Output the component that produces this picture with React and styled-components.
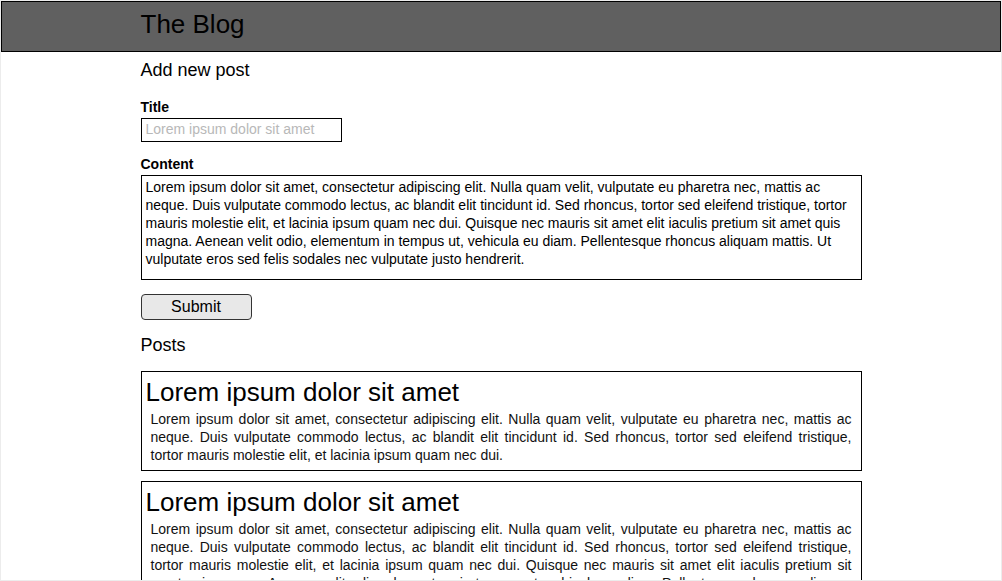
import React from "react";
import styled, { createGlobalStyle } from "styled-components";

const GlobalStyle = createGlobalStyle`
  html, body {
    margin: 0;
    padding: 0;
    background: #ffffff;
  }
  body {
    font-family: "Liberation Sans", Arial, sans-serif;
    color: #000;
  }
  * { box-sizing: border-box; }
`;

const Page = styled.div`
  width: 1002px;
  height: 581px;
  border: 1px solid #ececec;
  overflow: hidden;
  background: #fff;
`;

const Header = styled.header`
  height: 51px;
  background: #606060;
  border: 1px solid #000;
  padding-top: 7px;
`;

const Column = styled.div`
  width: 721px;
  margin: 0 auto;
`;

const Brand = styled.h1`
  margin: 0;
  font-size: 26px;
  line-height: 30px;
  font-weight: 400;
  color: #000;
`;

const SectionTitle = styled.h2`
  margin: ${(p) => p.$top}px 0 0;
  font-size: 18px;
  line-height: 21px;
  font-weight: 400;
`;

const Form = styled.form`
  display: flex;
  flex-direction: column;
  align-items: flex-start;
`;

const Field = styled.div`
  display: flex;
  flex-direction: column;
  align-items: flex-start;
  gap: 3px;
  width: 100%;
  margin-top: ${(p) => p.$top}px;
`;

const Label = styled.label`
  font-size: 14px;
  line-height: 16px;
  font-weight: 700;
`;

const TextInput = styled.input`
  width: 201px;
  height: 24px;
  border: 1px solid #000;
  border-radius: 0;
  padding: 0 4px 2px;
  font-family: "Liberation Sans", Arial, sans-serif;
  font-size: 14px;
  color: #000;
  outline: none;
  &::placeholder {
    color: #b8b8b8;
  }
`;

const TextArea = styled.textarea`
  display: block;
  width: 721px;
  height: 105px;
  border: 1px solid #000;
  border-radius: 0;
  padding: 2px 4px;
  margin: 0;
  font-family: "Liberation Sans", Arial, sans-serif;
  font-size: 14px;
  line-height: 18px;
  color: #000;
  resize: none;
  overflow: hidden;
  outline: none;
`;

const SubmitButton = styled.button`
  margin-top: 14px;
  width: 111px;
  height: 26px;
  border: 1px solid #333;
  border-radius: 4px;
  background: #e8e8e8;
  font-family: "Liberation Sans", Arial, sans-serif;
  font-size: 16px;
  line-height: 18px;
  color: #000;
  padding: 0;
  cursor: pointer;
`;

const PostList = styled.div`
  display: flex;
  flex-direction: column;
  gap: 10px;
  margin-top: 15px;
`;

const PostCard = styled.article`
  border: 1px solid #000;
  padding: 5px 4px 4px;
`;

const PostTitle = styled.h3`
  margin: 0;
  font-size: 26px;
  line-height: 31px;
  font-weight: 400;
`;

const PostBody = styled.p`
  margin: 2px 5px 2px;
  font-size: 14px;
  line-height: 18px;
  text-align: justify;
  color: #111;
`;

const LOREM_SHORT =
  "Lorem ipsum dolor sit amet, consectetur adipiscing elit. Nulla quam velit, vulputate eu pharetra nec, mattis ac neque. Duis vulputate commodo lectus, ac blandit elit tincidunt id. Sed rhoncus, tortor sed eleifend tristique, tortor mauris molestie elit, et lacinia ipsum quam nec dui.";

const LOREM_LONG =
  "Lorem ipsum dolor sit amet, consectetur adipiscing elit. Nulla quam velit, vulputate eu pharetra nec, mattis ac neque. Duis vulputate commodo lectus, ac blandit elit tincidunt id. Sed rhoncus, tortor sed eleifend tristique, tortor mauris molestie elit, et lacinia ipsum quam nec dui. Quisque nec mauris sit amet elit iaculis pretium sit amet quis magna. Aenean velit odio, elementum in tempus ut, vehicula eu diam. Pellentesque rhoncus aliquam mattis. Ut vulputate eros sed felis sodales nec vulputate justo hendrerit.";

const posts = [
  { id: 1, title: "Lorem ipsum dolor sit amet", body: LOREM_SHORT },
  { id: 2, title: "Lorem ipsum dolor sit amet", body: LOREM_LONG },
];

export default function App() {
  return (
    <>
      <GlobalStyle />
      <Page>
        <Header>
          <Column>
            <Brand>The Blog</Brand>
          </Column>
        </Header>
        <Column>
          <SectionTitle $top={8}>Add new post</SectionTitle>
          <Form onSubmit={(e) => e.preventDefault()}>
            <Field $top={18}>
              <Label htmlFor="title">Title</Label>
              <TextInput id="title" placeholder="Lorem ipsum dolor sit amet" />
            </Field>
            <Field $top={14}>
              <Label htmlFor="content">Content</Label>
              <TextArea id="content" defaultValue={LOREM_LONG} />
            </Field>
            <SubmitButton type="submit">Submit</SubmitButton>
          </Form>
          <SectionTitle $top={15}>Posts</SectionTitle>
          <PostList>
            {posts.map((p) => (
              <PostCard key={p.id}>
                <PostTitle>{p.title}</PostTitle>
                <PostBody>{p.body}</PostBody>
              </PostCard>
            ))}
          </PostList>
        </Column>
      </Page>
    </>
  );
}
